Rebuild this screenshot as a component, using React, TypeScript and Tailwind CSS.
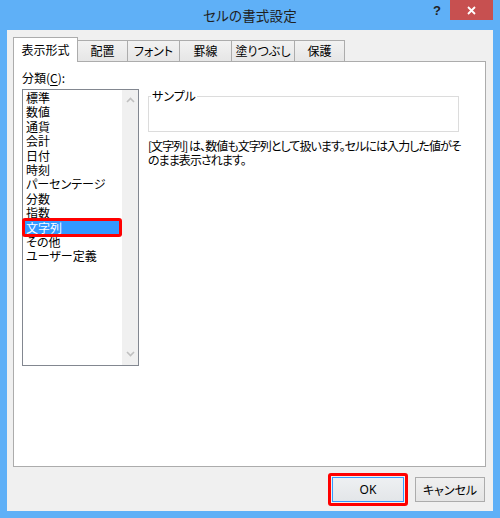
import React from 'react';

const tabs = [
  { label: '表示形式', cls: 'w-[65px]', active: true },
  { label: '配置', cls: 'w-[51px]', active: false },
  { label: 'フォント', cls: 'w-[53px]', active: false },
  { label: '罫線', cls: 'w-[53px]', active: false },
  { label: '塗りつぶし', cls: 'w-[64px]', active: false },
  { label: '保護', cls: 'w-[51px]', active: false },
];

const items = ['標準', '数値', '通貨', '会計', '日付', '時刻', 'パーセンテージ', '分数', '指数', '文字列', 'その他', 'ユーザー定義'];

function Chevron({ up }: { up?: boolean }) {
  return (
    <svg width="9" height="6" viewBox="0 0 9 6" className="block">
      <path d={up ? 'M1 5 L4.5 1.5 L8 5' : 'M1 1 L4.5 4.5 L8 1'} fill="none" stroke="#c0c0c0" strokeWidth="1.6" />
    </svg>
  );
}

export default function App() {
  return (
    <div className="w-[500px] h-[518px] bg-[#5fb0f7] flex flex-col px-[7px] pb-[7px] font-['Noto_Sans_CJK_JP','Noto_Sans',sans-serif] text-[12px] text-black [font-feature-settings:'palt']">
      {/* Title bar */}
      <div className="h-[30px] grid grid-cols-[1fr_auto_1fr]">
        <div />
        <div className="h-[30px] flex items-center text-[13.5px] text-[#202020] tracking-[0.2px]">セルの書式設定</div>
        <div className="flex justify-end items-start">
          <div className="w-[20px] h-[22px] flex items-center justify-center mr-[3px] text-[13px] font-bold text-[#222] font-['Liberation_Sans',sans-serif]">?</div>
          <div className="w-[43px] h-[20px] bg-[#c75050] flex items-center justify-center">
            <svg width="9" height="9" viewBox="0 0 9 9">
              <path d="M1 1 L8 8 M8 1 L1 8" stroke="#ffffff" strokeWidth="1.8" />
            </svg>
          </div>
        </div>
      </div>

      {/* Client area */}
      <div className="flex-1 bg-[#f0f0f0] flex flex-col pl-[6px] pr-[7px] pt-[7px]">
        {/* Tabs */}
        <div className="flex items-end h-[25px] -mb-px relative z-10">
          {tabs.map((t, i) =>
            t.active ? (
              <div key={t.label} className={`${t.cls} h-[25px] bg-white border border-b-0 border-[#acacac] flex items-center justify-center pb-[1px]`}>
                {t.label}
              </div>
            ) : (
              <div key={t.label} className={`${t.cls} h-[21px] mb-px ${i > 0 ? '-ml-px' : ''} bg-linear-to-b from-[#f2f2f2] to-[#e6e6e6] border border-b-0 border-[#acacac] flex items-center justify-center`}>
                {t.label}
              </div>
            )
          )}
        </div>

        {/* Panel */}
        <div className="flex-1 bg-white border border-[#acacac] pl-[8px] pt-[9px] flex flex-col">
          <div className="leading-[14px] h-[14px] mb-[4px]">
            分類(<span className="underline underline-offset-2">C</span>):
          </div>
          <div className="flex items-start">
            {/* Listbox */}
            <div className="w-[117px] h-[277px] border border-[#828790] flex">
              <div className="flex-1 pt-[1px]">
                {items.map((it) =>
                  it === '文字列' ? (
                    <div key={it} className="relative h-[14.4px] leading-[14.4px] bg-[#3399ff] text-white pl-[3px] whitespace-nowrap">
                      {it}
                      <span className="absolute left-[-1px] right-0 top-[-3px] bottom-[-2px] border-[3px] border-[#ff0000] rounded-[3px]" />
                    </div>
                  ) : (
                    <div key={it} className="h-[14.4px] leading-[14.4px] pl-[3px] whitespace-nowrap">
                      {it}
                    </div>
                  )
                )}
              </div>
              <div className="w-[16px] bg-[#f0f0f0] flex flex-col items-center justify-between pt-[7px] pb-[8px]">
                <Chevron up />
                <Chevron />
              </div>
            </div>

            {/* Right column */}
            <div className="ml-[9px] w-[311px]">
              <fieldset className="border border-[#dcdcdc] p-0 m-0 min-w-0">
                <legend className="ml-[2px] px-[1px] leading-[14px]">サンプル</legend>
                <div className="h-[28px]" />
              </fieldset>
              <div className="mt-[7px] leading-[14px] whitespace-nowrap tracking-[-0.95px]">
                [文字列] は、数値も文字列として扱います。セルには入力した値がそ
                <br />
                のまま表示されます。
              </div>
            </div>
          </div>
        </div>

        {/* Buttons */}
        <div className="h-[44px] flex justify-end items-start pt-[10px] gap-[11px] pr-[1px]">
          <div className="relative">
            <div className="w-[72px] h-[25px] border border-[#3399ff] bg-linear-to-b from-[#eef0f2] to-[#e3e6e9] flex items-center justify-center font-['Noto_Sans',sans-serif] text-[12px]">
              OK
            </div>
            <span className="absolute -inset-[4px] border-[3px] border-[#ff0000] rounded-[3px]" />
          </div>
          <div className="w-[70px] h-[25px] border border-[#acacac] bg-linear-to-b from-[#f0f0f0] to-[#e5e5e5] flex items-center justify-center">
            キャンセル
          </div>
        </div>
      </div>
    </div>
  );
}
